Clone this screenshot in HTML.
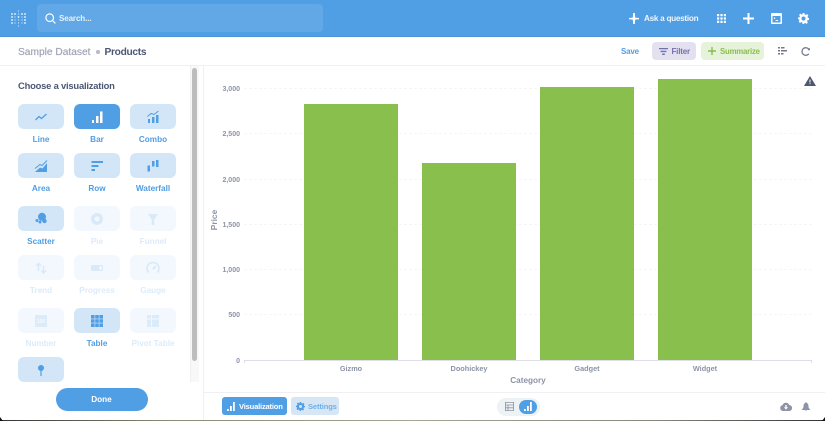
<!DOCTYPE html>
<html><head><meta charset="utf-8"><style>
*{box-sizing:border-box}
html,body{margin:0;padding:0;width:825px;height:421px;overflow:hidden;background:#fff;font-family:"Liberation Sans",sans-serif}
#r{position:absolute;left:0;top:0;width:825px;height:421px;overflow:hidden;filter:blur(.25px)}
.a{position:absolute}
.t{position:absolute;white-space:nowrap;font-weight:700}
.c{position:absolute;width:46px;height:25px;border-radius:6px;background:#d3e6f8}
.c.f{background:#f2f8fd}
.c svg{position:absolute;left:15px;top:4.5px;width:16px;height:16px}
.l{position:absolute;width:70px;text-align:center;font-size:8.2px;font-weight:700;color:#509ee3;white-space:nowrap;margin-top:1px}
.l.f{color:#dcebf9}
.y{position:absolute;left:210px;width:30px;text-align:right;font-size:7px;font-weight:700;color:#8e93a6;margin-top:1.5px}
.g{position:absolute;left:244px;width:568px;border-top:1px dashed #f5f6f8}
.b{position:absolute;width:94px;background:#88bf4d;bottom:61px}
.x{position:absolute;width:94px;text-align:center;font-size:7.3px;font-weight:700;color:#8e93a6;top:364px}
</style></head><body><div id="r">
<div class="a" style="left:0;top:0;width:825px;height:37px;background:#509ee3;border-bottom:1px solid #4a94d6"></div>
<svg class="a" style="left:10px;top:9px" width="17" height="19" viewBox="0 0 17 19" fill="#fff"><g opacity=".95"><circle cx="2" cy="5" r=".9"/><circle cx="2" cy="8" r=".9"/><circle cx="2" cy="11" r=".9"/><circle cx="2" cy="14" r=".9"/><circle cx="5" cy="5" r=".9"/><circle cx="5" cy="8" r=".7" opacity=".6"/><circle cx="5" cy="11" r=".7" opacity=".6"/><circle cx="5" cy="14" r=".7" opacity=".6"/><circle cx="8.5" cy="2" r=".7" opacity=".6"/><circle cx="8.5" cy="5" r=".7" opacity=".6"/><circle cx="8.5" cy="8" r=".9"/><circle cx="8.5" cy="11" r=".7" opacity=".6"/><circle cx="8.5" cy="14" r=".7" opacity=".6"/><circle cx="8.5" cy="17" r=".7" opacity=".6"/><circle cx="12" cy="5" r=".9"/><circle cx="12" cy="8" r=".7" opacity=".6"/><circle cx="12" cy="11" r=".7" opacity=".6"/><circle cx="12" cy="14" r=".7" opacity=".6"/><circle cx="15" cy="5" r=".9"/><circle cx="15" cy="8" r=".9"/><circle cx="15" cy="11" r=".9"/><circle cx="15" cy="14" r=".9"/></g></svg>
<div class="a" style="left:37px;top:4px;width:286px;height:28px;border-radius:4px;background:#62a8e7"></div>
<svg class="a" style="left:45px;top:13px" width="11" height="11" viewBox="0 0 11 11" fill="none" stroke="#fff" stroke-width="1.2"><circle cx="4.7" cy="4.7" r="3.8"/><path d="M7.5 7.5L10.4 10.4"/></svg>
<div class="t" style="left:59px;top:14px;font-size:8px;line-height:10px;color:#e6f1fb;letter-spacing:-.1px">Search...</div>
<svg class="a" style="left:629px;top:13px" width="10" height="11" viewBox="0 0 10 11" fill="#fff"><path d="M4.2 0h1.600l.4 4.600 3.800.4v1.200l-3.800.4-.4 4.400H4.200l-.4-4.400L0 6.200V5l3.800-.4z"/></svg>
<div class="t" style="left:644px;top:13.500px;font-size:8.200px;line-height:10px;color:#fff;opacity:.9;letter-spacing:-.28px">Ask a question</div>
<svg class="a" style="left:717px;top:14px" width="9" height="9" viewBox="0 0 9 9" fill="#fff"><path d="M0 0h2.200v2.200H0zM3.400 0h2.200v2.200H3.400zM6.800 0H9v2.200H6.800zM0 3.400h2.200v2.200H0zM3.400 3.400h2.200v2.200H3.400zM6.800 3.400H9v2.200H6.800zM0 6.800h2.200V9H0zM3.400 6.800h2.200V9H3.400zM6.800 6.800H9V9H6.800z"/></svg>
<svg class="a" style="left:743px;top:13px" width="11" height="11" viewBox="0 0 11 11" fill="#fff"><path d="M4.500 0h2v4.500H11v2H6.500V11h-2V6.500H0v-2h4.500z"/></svg>
<svg class="a" style="left:771px;top:13px" width="11" height="11" viewBox="0 0 11 11"><path fill="#fff" fill-rule="evenodd" d="M1 0h9a1 1 0 0 1 1 1v9a1 1 0 0 1-1 1H1a1 1 0 0 1-1-1V1a1 1 0 0 1 1-1zM1.500 3v6.500h8V3z"/><path fill="#fff" d="M2.800 4.500h1.400v1.400H2.800zM4.600 7h2.500v1H4.600z"/></svg>
<svg class="a" style="left:798px;top:13px" width="11" height="11" viewBox="0 0 24 24"><path fill="#fff" fill-rule="evenodd" d="M10 0h4l.7 3.300 2.200.9L19.800 2.400l2.800 2.800-1.800 2.900.9 2.200L24 11v4l-3.300.7-.9 2.200 1.800 2.900-2.800 2.800-2.900-1.800-2.200.9L13 24h-3l-.7-3.300-2.200-.9-2.900 1.800-2.800-2.800 1.800-2.900-.9-2.200L0 13.500v-3.500l3.300-.7.900-2.200L2.400 4.200l2.800-2.800 2.900 1.800 2.200-.9zM12 7.500a4.500 4.500 0 1 0 0 9 4.500 4.500 0 0 0 0-9z"/></svg>

<div class="a" style="left:0;top:65px;width:825px;height:1px;background:#f0f0f2"></div>
<div class="t" style="left:18px;top:45.500px;font-size:10.200px;line-height:13px;color:#9ea2b4;font-weight:400;-webkit-text-stroke:.15px #9ea2b4">Sample Dataset</div>
<div class="a" style="left:96px;top:50px;width:3.500px;height:3.500px;border-radius:50%;background:#b8bbc9"></div>
<div class="t" style="left:104.500px;top:45.500px;font-size:10.200px;line-height:13px;color:#4c5773;letter-spacing:-.3px">Products</div>
<div class="t" style="left:621px;top:47px;font-size:8px;line-height:10px;color:#509ee3;letter-spacing:-.2px">Save</div>
<div class="a" style="left:652px;top:42px;width:44px;height:18px;border-radius:4px;background:#e3e1f0"></div>
<svg class="a" style="left:659px;top:47.500px" width="9" height="7" viewBox="0 0 9 7" fill="#7172ad"><path d="M0 0h9v1.300H0zM1.600 2.800h5.800v1.300H1.600zM3.200 5.500h2.600V7H3.200z"/></svg>
<div class="t" style="left:671.500px;top:47px;font-size:8px;line-height:10px;color:#7172ad;letter-spacing:-.2px">Filter</div>
<div class="a" style="left:701px;top:42px;width:63px;height:18px;border-radius:4px;background:#e6f2d9"></div>
<svg class="a" style="left:707.500px;top:47px" width="8" height="8" viewBox="0 0 8 8" fill="#88bf4d"><path d="M3.300 0h1.400v3.300H8v1.400H4.700V8H3.300V4.700H0V3.300h3.300z"/></svg>
<div class="t" style="left:720px;top:47px;font-size:7.800px;line-height:10px;color:#88bf4d;letter-spacing:-.2px">Summarize</div>
<svg class="a" style="left:778px;top:47px" width="9" height="8" viewBox="0 0 9 8" fill="#73798c"><path d="M0 0h2v1.500H0zM3 0h3.500v1.500H3zM0 3h2v1.500H0zM3 3h6v1.500H3zM0 6h2v1.500H0zM3 6h2.500v1.500H3z"/></svg>
<svg class="a" style="left:801px;top:46.500px" width="9" height="9" viewBox="0 0 9 9" fill="none" stroke="#73798c" stroke-width="1.300"><path d="M7.800 2.200A3.800 3.800 0 1 0 7.800 6.800"/><path d="M6.500 3.200L9 3.200L9 .8" stroke="none" fill="#73798c"/></svg>

<div class="a" style="left:190px;top:66px;width:9px;height:316px;background:#f8f8f8;border-left:1px solid #efefef"></div>
<div class="a" style="left:192px;top:68px;width:5px;height:293px;border-radius:3px;background:#bdbdbd"></div>
<div class="a" style="left:203px;top:66px;width:1px;height:355px;background:#f0f0f2"></div>
<div class="t" style="left:18px;top:80px;font-size:9.400px;line-height:12px;color:#4c5773;letter-spacing:-.2px">Choose a visualization</div>

<div class="c" style="left:18px;top:104px"><svg viewBox="0 0 16 16" fill="none" stroke="#509ee3" stroke-width="1.300"><path d="M2.500 11L6 7.500l2.500 2L13.500 5"/></svg></div>
<div class="c" style="left:74px;top:104px;background:#509ee3"><svg viewBox="0 0 16 16" fill="#fff"><path d="M3 11h2v3H3zM7 7h2.500v7H7zM11 2.500h2.500V14H11z"/></svg></div>
<div class="c" style="left:130px;top:104px"><svg viewBox="0 0 16 16" fill="#509ee3"><path d="M3 10h2v4H3zM7 8h2.500v6H7zM11 6h2.500v8H11z"/><path d="M2.500 7.500L6 4.500l3 1 4.500-3.500" fill="none" stroke="#509ee3" stroke-width="1"/></svg></div>
<div class="c" style="left:18px;top:153px"><svg viewBox="0 0 16 16" fill="#509ee3"><path d="M2 14L7 9.500l2.500 1L14 5v9z"/><path d="M2 10.500L7 6.500l2 1 5-5" fill="none" stroke="#509ee3" stroke-width="1"/></svg></div>
<div class="c" style="left:74px;top:153px"><svg viewBox="0 0 16 16" fill="#509ee3"><path d="M2.500 3h11.500v2H2.500zM2.500 7h7v2h-7zM2.500 11h3.500v2H2.500z"/></svg></div>
<div class="c" style="left:130px;top:153px"><svg viewBox="0 0 16 16" fill="#509ee3"><path d="M2.500 7.500h2.500v6H2.500zM7 3h2.500v5.500H7zM11 2h2.500v7H11z"/></svg></div>
<div class="c" style="left:18px;top:206px"><svg viewBox="0 0 16 16" fill="#509ee3"><circle cx="9" cy="5.800" r="4"/><circle cx="11.500" cy="10" r="2.200"/><circle cx="4" cy="9.500" r="1.500"/><circle cx="7" cy="11" r="1.500"/></svg></div>
<div class="c f" style="left:74px;top:206px"><svg viewBox="0 0 16 16" fill="none" stroke="#d9e9f8" stroke-width="3.500"><circle cx="8" cy="8" r="4.200"/></svg></div>
<div class="c f" style="left:130px;top:206px"><svg viewBox="0 0 16 16" fill="#d9e9f8"><path d="M3 3h10L9.300 8.500V14H6.700V8.500z"/></svg></div>
<div class="c f" style="left:18px;top:255px"><svg viewBox="0 0 16 16" fill="none" stroke="#d9e9f8" stroke-width="1.500"><path d="M5.500 11V4M3 6l2.500-2.500L8 6M10.500 6v7M8.500 10.500l2 2.500 2.500-2.500"/></svg></div>
<div class="c f" style="left:74px;top:255px"><svg viewBox="0 0 16 16"><rect x="2" y="5" width="12" height="6" rx="1.500" fill="#d9e9f8"/><rect x="10.500" y="6.500" width="2" height="3" fill="#fff"/></svg></div>
<div class="c f" style="left:130px;top:255px"><svg viewBox="0 0 16 16" fill="none" stroke="#d9e9f8" stroke-width="1.500"><path d="M3.500 12.500a6 6 0 1 1 9 0"/><path d="M8 9.500L10.500 6" stroke-width="2"/></svg></div>
<div class="c f" style="left:18px;top:308px"><svg viewBox="0 0 16 16"><rect x="2" y="2" width="12" height="12" fill="#dcebf9"/><text x="8" y="10" text-anchor="middle" font-size="5" fill="#fff" font-family="Liberation Sans,sans-serif">100</text></svg></div>
<div class="c" style="left:74px;top:308px"><svg viewBox="0 0 16 16" fill="#509ee3"><path d="M2 2h3.600v3.600H2zM6.200 2h3.600v3.600H6.200zM10.400 2H14v3.600h-3.600zM2 6.200h3.600v3.600H2zM6.200 6.200h3.600v3.600H6.200zM10.400 6.200H14v3.600h-3.600zM2 10.400h3.600V14H2zM6.200 10.400h3.600V14H6.200zM10.400 10.400H14V14h-3.600z"/></svg></div>
<div class="c f" style="left:130px;top:308px"><svg viewBox="0 0 16 16" fill="#dcebf9"><path d="M2 2h4v3.500H2zM7 2h7v3.500H7zM2 6.500h4V14H2zM7 6.500h7V14H7z"/></svg></div>
<div class="c" style="left:18px;top:357px"><svg viewBox="0 0 16 16" fill="#509ee3"><circle cx="8" cy="6" r="3"/><rect x="7.400" y="8" width="1.200" height="6"/></svg></div>

<div class="l" style="left:6px;top:134px">Line</div><div class="l" style="left:62px;top:134px">Bar</div><div class="l" style="left:118px;top:134px">Combo</div>
<div class="l" style="left:6px;top:183px">Area</div><div class="l" style="left:62px;top:183px">Row</div><div class="l" style="left:118px;top:183px">Waterfall</div>
<div class="l" style="left:6px;top:236px">Scatter</div><div class="l f" style="left:62px;top:236px">Pie</div><div class="l f" style="left:118px;top:236px">Funnel</div>
<div class="l f" style="left:6px;top:285px">Trend</div><div class="l f" style="left:62px;top:285px">Progress</div><div class="l f" style="left:118px;top:285px">Gauge</div>
<div class="l f" style="left:6px;top:338px">Number</div><div class="l" style="left:62px;top:338px">Table</div><div class="l f" style="left:118px;top:338px">Pivot Table</div>

<div class="a" style="left:55.500px;top:388px;width:92px;height:23px;border-radius:12px;background:#509ee3"></div>
<div class="t" style="left:55.500px;top:395px;width:92px;text-align:center;font-size:8.200px;line-height:10px;color:#fff">Done</div>

<div class="g" style="top:88px"></div><div class="g" style="top:133px"></div><div class="g" style="top:179px"></div><div class="g" style="top:224px"></div><div class="g" style="top:269px"></div><div class="g" style="top:314px"></div>
<div class="y" style="top:84px">3,000</div><div class="y" style="top:129px">2,500</div><div class="y" style="top:175px">2,000</div><div class="y" style="top:220px">1,500</div><div class="y" style="top:265px">1,000</div><div class="y" style="top:310px">500</div><div class="y" style="top:356px">0</div>
<div class="t" style="left:208px;top:214px;width:12px;height:12px;font-size:8.400px;line-height:12px;color:#8e93a6;transform:rotate(-90deg);display:flex;justify-content:center">Price</div>
<div class="b" style="left:304px;top:104px"></div>
<div class="b" style="left:422px;top:163px"></div>
<div class="b" style="left:540px;top:87px"></div>
<div class="b" style="left:658px;top:79px"></div>
<div class="a" style="left:244px;top:360px;width:568px;height:1px;background:#dcdfe6"></div>
<div class="a" style="left:244px;top:360px;width:1px;height:3px;background:#dcdfe6"></div>
<div class="a" style="left:811px;top:360px;width:1px;height:3px;background:#dcdfe6"></div>
<div class="x" style="left:304px">Gizmo</div><div class="x" style="left:422px">Doohickey</div><div class="x" style="left:540px">Gadget</div><div class="x" style="left:658px">Widget</div>
<div class="t" style="left:470px;top:376px;width:116px;text-align:center;font-size:8.200px;line-height:10px;color:#8e93a6">Category</div>
<svg class="a" style="left:804px;top:76px" width="12" height="10" viewBox="0 0 12 10"><path fill="#4c5773" d="M6 0l6 10H0z"/><path fill="#fff" d="M5.500 3.500h1v3h-1zM5.500 7.300h1v1h-1z"/></svg>

<div class="a" style="left:204px;top:392px;width:621px;height:1px;background:#f0f0f2"></div>
<div class="a" style="left:222px;top:397px;width:65px;height:18px;border-radius:3px;background:#509ee3"></div>
<svg class="a" style="left:227px;top:401.500px" width="8" height="9" viewBox="0 0 8 9" fill="#fff"><path d="M0 7h1.800v2H0zM3 4h1.800v5H3zM6 0h1.800v9H6z"/></svg>
<div class="t" style="left:239px;top:402px;font-size:7.600px;line-height:10px;color:#fff;letter-spacing:-.2px">Visualization</div>
<div class="a" style="left:291px;top:397px;width:48px;height:18px;border-radius:3px;background:#d7e6f5"></div>
<svg class="a" style="left:295.500px;top:402px" width="9" height="9" viewBox="0 0 24 24"><path fill="#509ee3" fill-rule="evenodd" d="M10 0h4l.7 3.300 2.200.9L19.800 2.400l2.800 2.800-1.800 2.900.9 2.200L24 11v3l-3.300.7-.9 2.200 1.800 2.900-2.800 2.800-2.900-1.800-2.200.9L13 24h-3l-.7-3.300-2.200-.9-2.900 1.800-2.800-2.800 1.800-2.900-.9-2.200L0 13.500v-3.500l3.300-.7.900-2.200L2.400 4.200l2.800-2.800 2.900 1.800 2.200-.9zM12 8a4 4 0 1 0 0 8 4 4 0 0 0 0-8z"/></svg>
<div class="t" style="left:308px;top:402px;font-size:7.600px;line-height:10px;color:#6fb0e8;letter-spacing:-.15px">Settings</div>
<div class="a" style="left:497px;top:398px;width:43px;height:18px;border-radius:9px;background:#edf2f5"></div>
<svg class="a" style="left:505px;top:402px" width="9" height="9" viewBox="0 0 9 9" fill="none" stroke="#8e93a6" stroke-width=".8"><path d="M.4.400h8.200v8.200H.4zM.4 3h8.200M.4 5.800h8.200M3 3v5.600"/></svg>
<div class="a" style="left:519px;top:399.500px;width:18px;height:14px;border-radius:7px;background:#509ee3"></div>
<svg class="a" style="left:524px;top:402px" width="8" height="9" viewBox="0 0 8 9" fill="#fff"><path d="M0 7h1.800v2H0zM3 4h1.800v5H3zM6 0h1.800v9H6z"/></svg>
<svg class="a" style="left:780px;top:402px" width="12" height="9" viewBox="0 0 12 9"><path fill="#8e93a6" d="M3 9a3 3 0 0 1-.5-5.900A3.600 3.600 0 0 1 9.200 3 3 3 0 0 1 9 9z"/><path fill="#fff" d="M5.300 3h1.400v2.300h1.400L6 7.600 3.900 5.300h1.400z"/></svg>
<svg class="a" style="left:802px;top:402px" width="8" height="9" viewBox="0 0 8 9" fill="#8e93a6"><path d="M4 0a1 1 0 0 1 .7 1C6.200 1.400 6.500 3 6.500 4.500c0 1.200.5 2 1.500 2.800V8H0v-.7c1-.8 1.500-1.600 1.500-2.800C1.500 3 1.800 1.400 3.300 1A1 1 0 0 1 4 0zM3 8.300h2L4 9z"/></svg>

<div class="a" style="left:0;top:420px;width:825px;height:1px;background:linear-gradient(90deg,#333,#8a8a75 20%,#a5a596 50%,#86867c 80%,#333)"></div>
<div class="a" style="left:0;top:417px;width:3px;height:4px;background:#111;clip-path:polygon(0 0,100% 100%,0 100%)"></div>
<div class="a" style="left:822px;top:417px;width:3px;height:4px;background:#111;clip-path:polygon(100% 0,100% 100%,0 100%)"></div>
</div></body></html>
